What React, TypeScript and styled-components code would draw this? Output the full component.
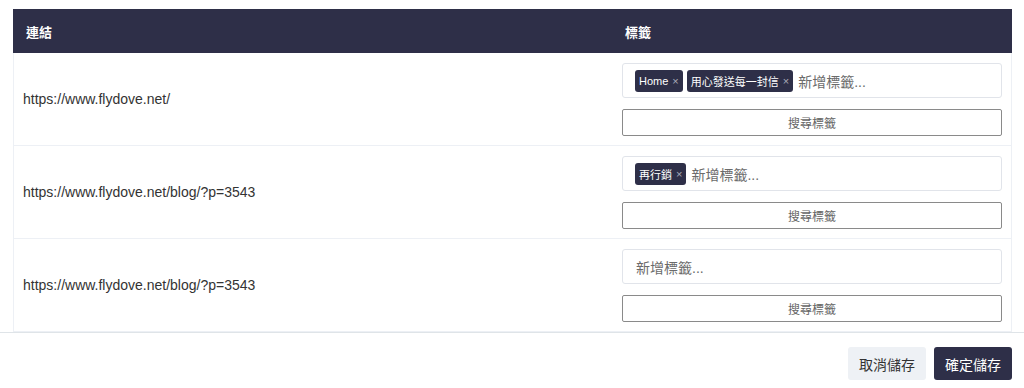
import React from "react";
import styled, { createGlobalStyle } from "styled-components";

const GlobalStyle = createGlobalStyle`
  body {
    margin: 0;
    background: #ffffff;
    font-family: "Liberation Sans", Arial, "Noto Sans CJK TC", sans-serif;
    color: #333;
  }
`;

const Page = styled.div`
  width: 1024px;
  height: 388px;
  display: flex;
  flex-direction: column;
  overflow: hidden;
`;

const ScrollArea = styled.div`
  height: 332px;
  overflow: hidden;
  padding: 9px 12px 0 13px;
  box-sizing: border-box;
  display: flex;
`;

const Table = styled.div`
  flex: 1;
  display: grid;
  grid-template-columns: 599px 1fr;
  grid-auto-rows: min-content;
  align-content: start;
  border-left: 1px solid #edf0f5;
  border-right: 1px solid #edf0f5;
`;

const HeadCell = styled.div<{ last?: boolean }>`
  background: #2e2f48;
  color: #fff;
  font-size: 13px;
  font-weight: bold;
  height: 44px;
  display: flex;
  align-items: center;
  padding-left: 13px;
  margin-left: -1px;
  margin-right: ${(p) => (p.last ? "-1px" : "0")};
`;

const LinkCell = styled.div`
  display: flex;
  align-items: center;
  padding-left: 9px;
  font-size: 14px;
  color: #333;
  border-bottom: 1px solid #edf0f5;
`;

const TagCell = styled.div`
  display: flex;
  flex-direction: column;
  gap: 11px;
  padding: 10px 9px 9px 9px;
  border-bottom: 1px solid #edf0f5;
`;

const TagInput = styled.div`
  height: 35px;
  box-sizing: border-box;
  border: 1px solid #e1e4ea;
  border-radius: 3px;
  display: flex;
  align-items: center;
  gap: 4px;
  padding-left: 12px;
`;

const Chip = styled.span`
  display: inline-flex;
  align-items: center;
  gap: 4px;
  height: 22px;
  padding: 0 4px;
  border-radius: 3px;
  background: #2e2f48;
  color: #fff;
  font-size: 11px;
`;

const ChipClose = styled.span`
  color: #a9abb8;
  font-size: 11px;
`;

const Placeholder = styled.span`
  font-size: 14px;
  color: #6b6b6b;
  margin-left: 1px;
`;

const SearchButton = styled.button`
  height: 27px;
  box-sizing: border-box;
  border: 1px solid #8a8a8a;
  border-radius: 2px;
  background: #fff;
  color: #666;
  font-size: 12px;
  font-family: "Liberation Sans", Arial, "Noto Sans CJK TC", sans-serif;
  cursor: pointer;
`;

const Footer = styled.div`
  flex: 1;
  border-top: 1px solid #dfe4e8;
  display: flex;
  justify-content: flex-end;
  align-items: flex-start;
  gap: 8px;
  padding: 14px 12px 0 0;
`;

const FooterButton = styled.button<{ primary?: boolean }>`
  width: 78px;
  height: 33px;
  border: none;
  border-radius: 3px;
  font-size: 14px;
  font-family: "Liberation Sans", Arial, "Noto Sans CJK TC", sans-serif;
  background: ${(p) => (p.primary ? "#2e2f48" : "#eef1f5")};
  color: ${(p) => (p.primary ? "#fff" : "#333")};
  cursor: pointer;
`;

const rows = [
  { url: "https://www.flydove.net/", tags: ["Home", "用心發送每一封信"] },
  { url: "https://www.flydove.net/blog/?p=3543", tags: ["再行銷"] },
  { url: "https://www.flydove.net/blog/?p=3543", tags: [] as string[] },
];

export default function App() {
  return (
    <Page>
      <GlobalStyle />
      <ScrollArea>
        <Table>
          <HeadCell>連結</HeadCell>
          <HeadCell last>標籤</HeadCell>
          {rows.map((row, i) => (
            <React.Fragment key={i}>
              <LinkCell>{row.url}</LinkCell>
              <TagCell>
                <TagInput>
                  {row.tags.map((t) => (
                    <Chip key={t}>
                      {t}
                      <ChipClose>×</ChipClose>
                    </Chip>
                  ))}
                  <Placeholder>新增標籤...</Placeholder>
                </TagInput>
                <SearchButton>搜尋標籤</SearchButton>
              </TagCell>
            </React.Fragment>
          ))}
        </Table>
      </ScrollArea>
      <Footer>
        <FooterButton>取消儲存</FooterButton>
        <FooterButton primary>確定儲存</FooterButton>
      </Footer>
    </Page>
  );
}
